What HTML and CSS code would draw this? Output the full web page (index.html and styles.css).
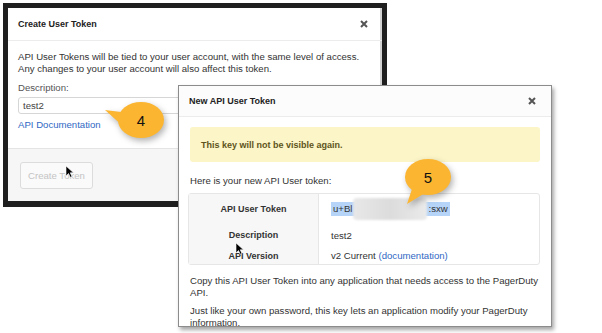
FILE: index.html
```html
<!DOCTYPE html>
<html lang="en">
<head>
  <meta charset="UTF-8" />
  <title>Create User Token</title>
  <link rel="stylesheet" href="styles.css">
</head>
<body>

<div class="canvas">
  <!-- first step: create dialog -->
  <section class="dlg dlg-create">
    <div class="dlg-head">
      <h2>Create User Token</h2>
      <svg class="close" width="8" height="8" viewBox="0 0 8 8"><path d="M1 1L7 7M7 1L1 7"/></svg>
    </div>
    <div class="dlg-body">
      <p>API User Tokens will be tied to your user account, with the same level of access.<br>Any changes to your user account will also affect this token.</p>
      <label class="field-label">Description:</label>
      <div class="input">test2</div>
      <a class="link doc-link" href="#">API Documentation</a>
    </div>
    <div class="dlg-foot">
      <button disabled>Create Token</button>
    </div>
  </section>

  <!-- second step: token shown -->
  <section class="dlg dlg-new">
    <div class="dlg-head">
      <h2>New API User Token</h2>
      <svg class="close" width="8" height="8" viewBox="0 0 8 8"><path d="M1 1L7 7M7 1L1 7"/></svg>
    </div>
    <div class="dlg-body">
      <div class="alert">This key will not be visible again.</div>
      <p class="intro">Here is your new API User token:</p>
      <div class="token-table">
        <div class="cell label row-token">API User Token</div>
        <div class="cell value row-token"><span class="sel">u+Bl<span class="mask"></span>:sxw</span></div>
        <div class="cell label row-desc">Description</div>
        <div class="cell value row-desc">test2</div>
        <div class="cell label row-ver">API Version</div>
        <div class="cell value row-ver"><span>v2 Current <a class="link" href="#">(documentation)</a></span></div>
      </div>
      <p class="note">Copy this API User Token into any application that needs access to the PagerDuty API.</p>
      <p class="note second">Just like your own password, this key lets an application modify your PagerDuty information.</p>
    </div>
  </section>

  <!-- step callouts and mouse pointers -->
  <svg class="overlay" width="602" height="333" viewBox="0 0 602 333">
    <g class="bubble">
      <ellipse cx="141" cy="120" rx="23" ry="18"/>
      <polygon points="105,110 121,112 125,128"/>
    </g>
    <text class="bubble-num" x="141" y="126">4</text>
    <g class="bubble">
      <ellipse cx="428" cy="177" rx="23" ry="18"/>
      <polygon points="407,204 413,186 425,193"/>
    </g>
    <text class="bubble-num" x="428" y="183">5</text>
    <path class="pointer" d="M66 166 L66 176 L68.5 173.5 L70.3 177.3 L72 176.5 L70.2 172.8 L73.5 172.8 Z"/>
    <path class="pointer" d="M236 243 L236 253 L238.5 250.5 L240.3 254.3 L242 253.5 L240.2 249.8 L243.5 249.8 Z"/>
  </svg>
</div>

</body>
</html>
```

FILE: styles.css
```css
body {
  margin: 0;
  background: #fff;
  font-family: "Liberation Sans", Arial, sans-serif;
  font-size: 9.6px;
  color: #333;
}

.canvas {
  position: relative;
  width: 602px;
  height: 333px;
  overflow: hidden;
}

.dlg {
  position: absolute;
  background: #fff;
  display: flex;
  flex-direction: column;
  overflow: hidden;
}

.dlg > * {
  flex-shrink: 0;
}

.dlg-head {
  display: flex;
  align-items: center;
  justify-content: space-between;
  border-bottom: 1px solid #ececec;
  padding: 0 14px 0 10px;
}

.dlg-head h2 {
  margin: 0;
  font-size: 9px;
  font-weight: bold;
  color: #222;
}

.close path {
  stroke: #555;
  stroke-width: 2;
  fill: none;
}

p {
  margin: 0;
  line-height: 12px;
}

.link {
  color: #2f68c4;
  text-decoration: none;
}

/* left dialog */
.dlg-create {
  left: 3px;
  top: 3px;
  width: 374px;
  height: 193px;
  border: 5px solid #1f1f1f;
  border-bottom-width: 6px;
  box-shadow: inset -2px 0 #d2d2d2;
}

.dlg-create .dlg-head {
  height: 32px;
  padding-right: 14px;
}

.dlg-create .dlg-body {
  padding: 10px 10px 17px;
  display: flex;
  flex-direction: column;
}

.field-label {
  margin-top: 7px;
  line-height: 12px;
  color: #555;
}

.input {
  margin-top: 3px;
  height: 15px;
  line-height: 15px;
  border: 1px solid #d6d6d6;
  border-radius: 3px;
  padding-left: 4px;
  color: #444;
}

.doc-link {
  margin-top: 5px;
  line-height: 12px;
}

.dlg-create .dlg-foot {
  flex: 1 0 auto;
  background: #f6f6f6;
  border-top: 1px solid #e4e4e4;
  padding: 13px 12px;
}

.dlg-foot button {
  width: 73px;
  height: 27px;
  border: 1px solid #dcdcdc;
  border-radius: 3px;
  background: #fafafa;
  color: #c4c4c4;
  font-family: inherit;
  font-size: 9.6px;
  padding: 0;
}

/* right dialog */
.dlg-new {
  left: 178px;
  top: 85px;
  width: 372px;
  height: 240px;
  border: 1px solid #8c8c8c;
  box-shadow: 2px 3px 4px rgba(0, 0, 0, 0.35);
}

.dlg-new .dlg-head {
  height: 30px;
  background: #fcfcfc;
  padding-right: 15px;
}

.dlg-new .dlg-body {
  padding: 10px 11px 0;
}

.alert {
  height: 35px;
  display: flex;
  align-items: center;
  padding-left: 11px;
  background: #fbf5c7;
  border-radius: 3px;
  color: #5e5420;
  font-weight: bold;
  font-size: 9px;
}

.intro {
  margin-top: 13px;
}

.token-table {
  margin: 6px 0 0 -2px;
  display: grid;
  grid-template-columns: 130px 1fr;
  border: 1px solid #e6e6e6;
  border-radius: 3px;
}

.cell {
  display: flex;
  align-items: center;
}

.cell.label {
  justify-content: center;
  background: #f7f7f7;
  border-right: 1px solid #e6e6e6;
  font-weight: bold;
  font-size: 9px;
}

.cell.value {
  padding-left: 12px;
}

.row-token { height: 29px; }
.row-desc { height: 24px; }
.row-ver { height: 17px; }

.sel {
  display: inline-flex;
  align-items: center;
  background: #b5d4f8;
  height: 14px;
  padding: 0 2px;
}

.mask {
  display: inline-block;
  width: 74px;
  height: 22px;
  margin: 0 1px;
  border-radius: 4px;
  background: linear-gradient(90deg, #e8e8e8, #dcdcdc 50%, #eaeaea);
  filter: blur(1px);
}

.note {
  margin-top: 10px;
}

.note.second {
  margin-top: 6px;
}

/* overlay */
.overlay {
  position: absolute;
  left: 0;
  top: 0;
  pointer-events: none;
}

.bubble {
  fill: #fbb530;
  filter: drop-shadow(2px 3px 3px rgba(0, 0, 0, 0.3));
}

.bubble-num {
  font-family: "Liberation Sans", Arial, sans-serif;
  font-size: 15px;
  fill: #111;
  text-anchor: middle;
}

.pointer {
  fill: #000;
  stroke: #fff;
  stroke-width: 0.6;
}
```
